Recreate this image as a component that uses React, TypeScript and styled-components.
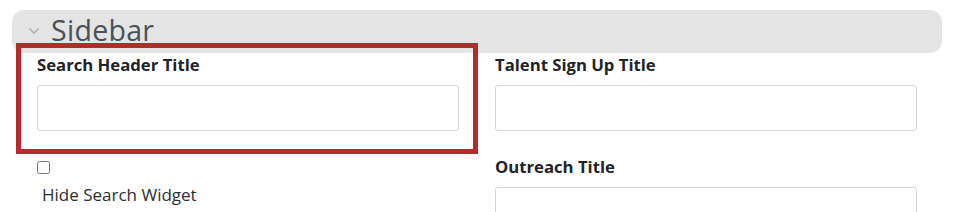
import React from 'react';
import styled, { createGlobalStyle } from 'styled-components';

const GlobalStyle = createGlobalStyle`
  body {
    margin: 0;
    background: #ffffff;
    font-family: "Open Sans", "Liberation Sans", sans-serif;
  }
`;

const Page = styled.div`
  width: 957px;
  height: 212px;
  overflow: hidden;
  background: #ffffff;
`;

const SectionHeader = styled.div`
  margin: 10px 15px 0 12px;
  height: 43px;
  background: #e4e4e4;
  border-radius: 12px;
  display: flex;
  align-items: center;
  gap: 11px;
  padding-left: 16px;
  box-sizing: border-box;
`;

const Chevron = styled.svg`
  width: 12px;
  height: 8px;
  margin-top: -1px;
`;

const SectionTitle = styled.span`
  font-size: 28.5px;
  color: #4a5058;
  letter-spacing: 0.3px;
  line-height: 1;
  margin-top: -3px;
`;

const Grid = styled.div`
  display: grid;
  grid-template-columns: 422px 422px;
  column-gap: 36px;
  padding-left: 37px;
  margin-top: 2px;
  align-items: start;
`;

const Column = styled.div`
  display: flex;
  flex-direction: column;
`;

const Field = styled.div<{ $highlight?: boolean }>`
  position: relative;
  margin-bottom: 26px;

  ${({ $highlight }) =>
    $highlight &&
    `
    &::after {
      content: '';
      position: absolute;
      left: -21px;
      right: -19px;
      top: -12px;
      bottom: -23px;
      border: 5px solid #b8292b;
      pointer-events: none;
    }
  `}
`;

const Label = styled.label`
  display: block;
  font-size: 16.7px;
  font-weight: 700;
  line-height: 20px;
  color: #1f2329;
  margin-bottom: 10px;
`;

const TextInput = styled.input`
  display: block;
  width: 422px;
  height: 46px;
  box-sizing: border-box;
  border: 1px solid #d5d5d5;
  border-radius: 3px;
  background: #ffffff;
  padding: 0 10px;
  outline: none;
`;

const CheckRow = styled.div`
  display: flex;
  flex-direction: column;
  margin-top: 4px;
`;

const CheckBox = styled.input`
  width: 13px;
  height: 13px;
  margin: 0;
`;

const CheckLabel = styled.span`
  font-size: 17px;
  line-height: 20px;
  color: #2a2e33;
  margin: 11px 0 0 5px;
`;

const App: React.FC = () => {
  return (
    <Page>
      <GlobalStyle />
      <SectionHeader>
        <Chevron viewBox="0 0 12 8">
          <path d="M1.5 1.5 L6 6 L10.5 1.5" fill="none" stroke="#a7b2bb" strokeWidth="1.6" />
        </Chevron>
        <SectionTitle>Sidebar</SectionTitle>
      </SectionHeader>
      <Grid>
        <Column>
          <Field $highlight>
            <Label>Search Header Title</Label>
            <TextInput type="text" />
          </Field>
          <CheckRow>
            <CheckBox type="checkbox" />
            <CheckLabel>Hide Search Widget</CheckLabel>
          </CheckRow>
        </Column>
        <Column>
          <Field>
            <Label>Talent Sign Up Title</Label>
            <TextInput type="text" />
          </Field>
          <Field>
            <Label>Outreach Title</Label>
            <TextInput type="text" />
          </Field>
        </Column>
      </Grid>
    </Page>
  );
};

export default App;
